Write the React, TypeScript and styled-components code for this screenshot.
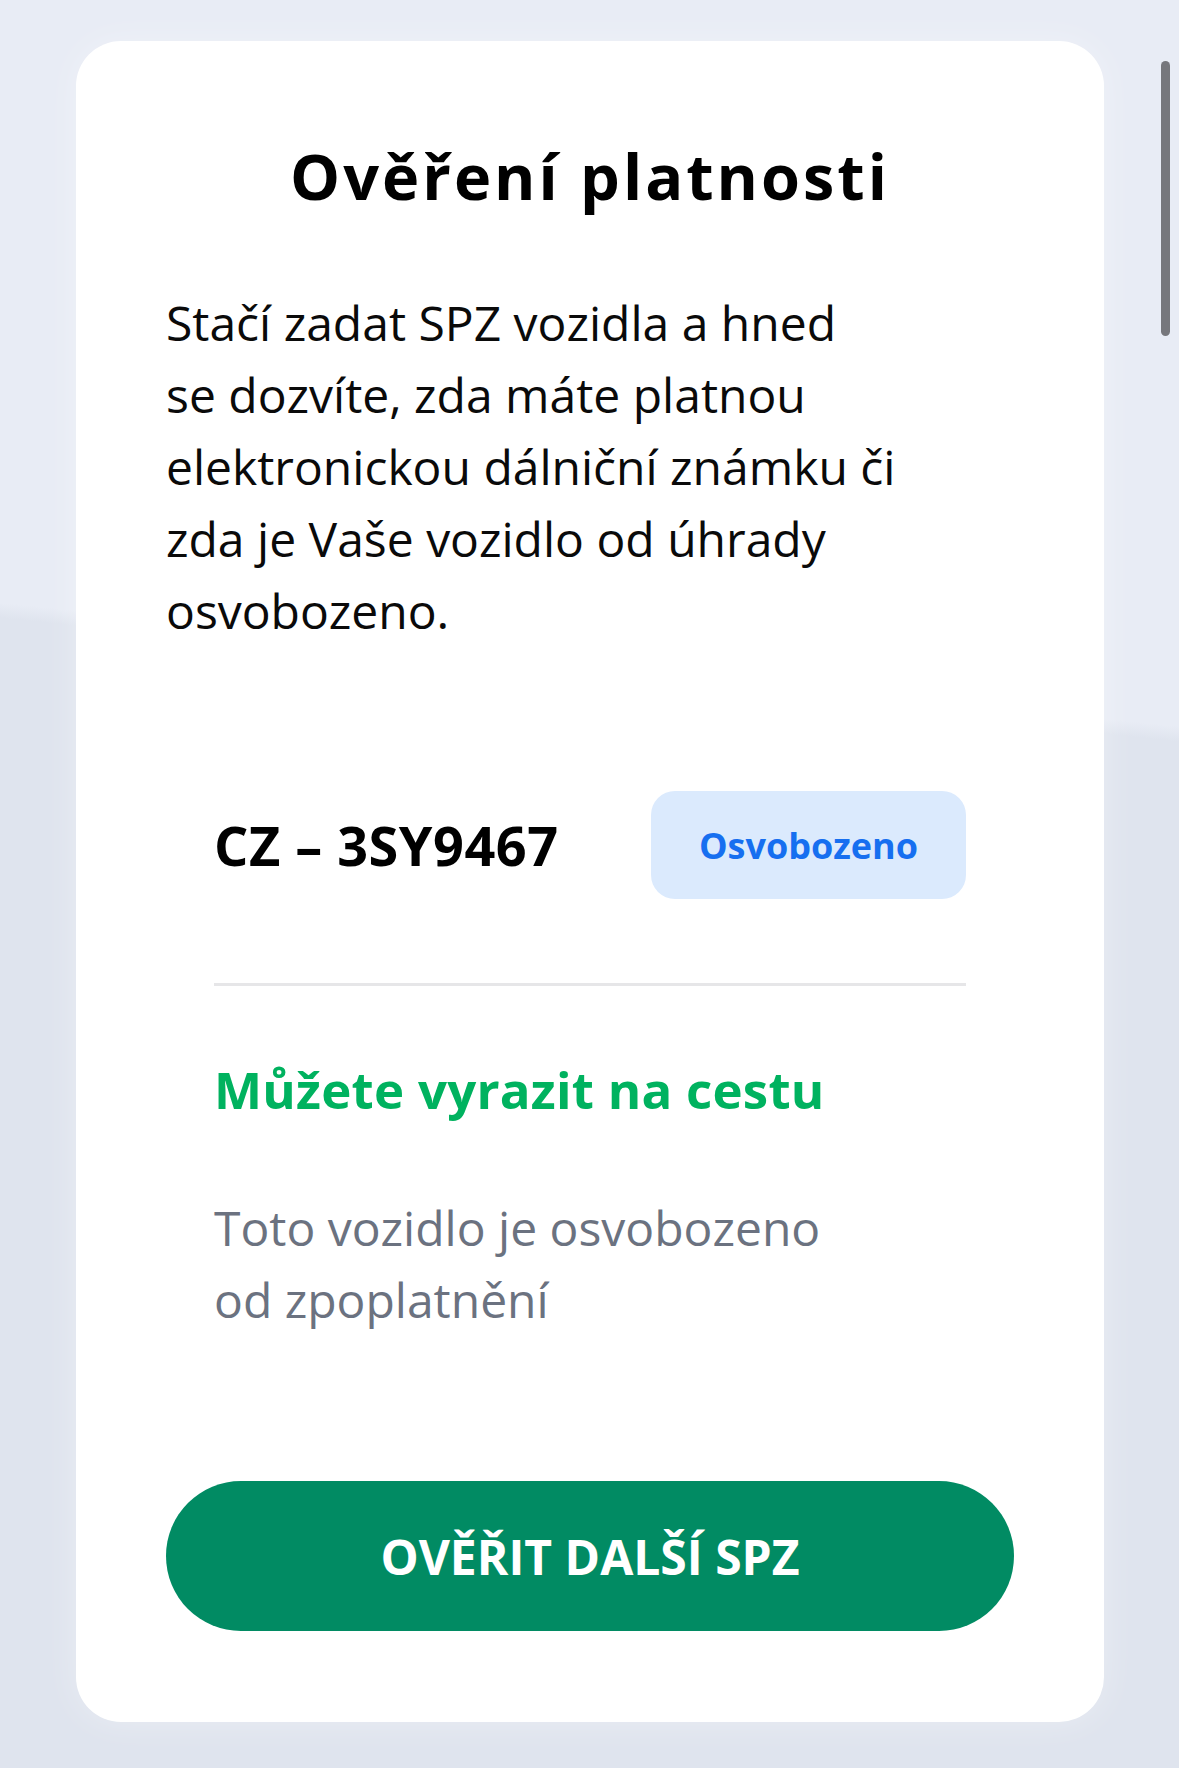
import React from "react";
import styled, { createGlobalStyle } from "styled-components";

const GlobalStyle = createGlobalStyle`
  html, body {
    margin: 0;
    padding: 0;
  }
  body {
    font-family: "Open Sans", "Noto Sans", "Liberation Sans", sans-serif;
    background: linear-gradient(186deg, #e8ecf5 0%, #e8ecf5 38.4%, #dfe4ee 39.2%, #dfe4ee 100%);
    min-height: 1768px;
  }
  * { box-sizing: border-box; }
`;

const Page = styled.main`
  position: relative;
  min-height: 1768px;
  padding: 41px 75px 46px 76px;
`;

const Scrollbar = styled.div`
  position: fixed;
  top: 61px;
  right: 9px;
  width: 9px;
  height: 275px;
  border-radius: 5px;
  background: #76777c;
`;

const Card = styled.section`
  background: #ffffff;
  border-radius: 45px;
  padding: 99px 90px 91px 90px;
  display: flex;
  flex-direction: column;
  box-shadow: 0 0 36px rgba(255, 255, 255, 0.35);
`;

const Title = styled.h1`
  margin: 0;
  font-family: "Open Sans", "Noto Sans", sans-serif;
  font-weight: 700;
  font-size: 63px;
  line-height: 72px;
  letter-spacing: 3px;
  color: #000000;
  text-align: center;
`;

const Lead = styled.p`
  margin: 75px 0 0 0;
  font-size: 48px;
  line-height: 72px;
  font-weight: 400;
  color: #0a0a0a;
`;

const Result = styled.div`
  margin-top: 144px;
  padding: 0 48px;
  display: flex;
  flex-direction: column;
`;

const PlateRow = styled.div`
  display: flex;
  align-items: center;
  justify-content: space-between;
  height: 108px;
`;

const Plate = styled.span`
  font-size: 54px;
  font-weight: 700;
  color: #000000;
  line-height: 1;
  letter-spacing: 0.5px;
`;

const Badge = styled.span`
  display: inline-flex;
  align-items: center;
  justify-content: center;
  width: 315px;
  height: 108px;
  border-radius: 24px;
  background: #dbeafd;
  color: #166ff0;
  font-size: 36px;
  font-weight: 700;
  letter-spacing: 0;
`;

const Divider = styled.hr`
  margin: 84px 0 0 0;
  border: none;
  height: 3px;
  background: #e6e6e8;
`;

const StatusTitle = styled.h2`
  margin: 67px 0 0 0;
  font-family: "Open Sans", "Noto Sans", sans-serif;
  font-weight: 700;
  font-size: 51px;
  line-height: 72px;
  letter-spacing: 0.25px;
  color: #00b25f;
`;

const StatusText = styled.p`
  margin: 67px 0 0 0;
  font-size: 48px;
  line-height: 72px;
  color: #6b7280;
`;

const PrimaryButton = styled.button`
  margin-top: 145px;
  height: 150px;
  width: 100%;
  border: none;
  border-radius: 75px;
  background: #018b63;
  color: #ffffff;
  font-family: "Open Sans", "Noto Sans", sans-serif;
  font-size: 48px;
  font-weight: 700;
  letter-spacing: 0;
  text-transform: uppercase;
  cursor: pointer;
`;

export default function App() {
  return (
    <>
      <GlobalStyle />
      <Page>
        <Card>
          <Title>Ověření platnosti</Title>
          <Lead>
            Stačí zadat SPZ vozidla a hned
            <br />
            se dozvíte, zda máte platnou
            <br />
            elektronickou dálniční známku či
            <br />
            zda je Vaše vozidlo od úhrady
            <br />
            osvobozeno.
          </Lead>
          <Result>
            <PlateRow>
              <Plate>CZ – 3SY9467</Plate>
              <Badge>Osvobozeno</Badge>
            </PlateRow>
            <Divider />
            <StatusTitle>Můžete vyrazit na cestu</StatusTitle>
            <StatusText>
              Toto vozidlo je osvobozeno
              <br />
              od zpoplatnění
            </StatusText>
          </Result>
          <PrimaryButton type="button">Ověřit další SPZ</PrimaryButton>
        </Card>
        <Scrollbar />
      </Page>
    </>
  );
}
